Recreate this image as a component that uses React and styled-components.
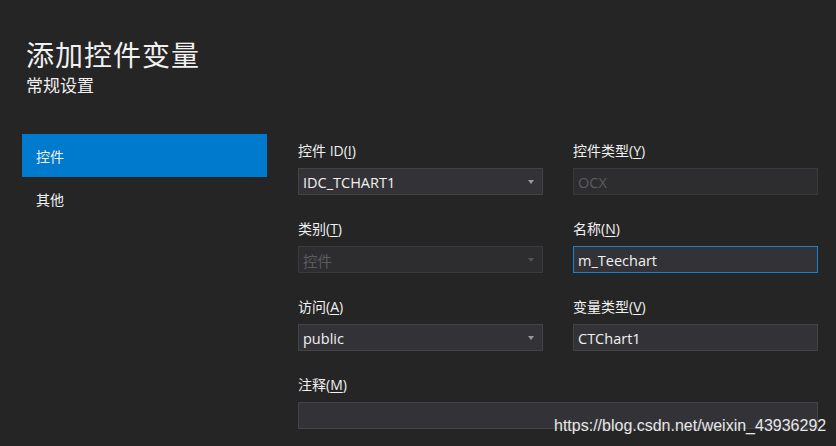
import React from "react";
import styled, { createGlobalStyle } from "styled-components";

const Global = createGlobalStyle`
  html, body { margin: 0; padding: 0; background: #252526; }
  body {
    width: 836px;
    height: 446px;
    overflow: hidden;
    font-family: "Open Sans", "Noto Sans CJK SC", sans-serif;
    color: #f1f1f1;
  }
`;

const Page = styled.div`
  position: relative;
  width: 836px;
  height: 446px;
  box-sizing: border-box;
  padding: 38px 0 0 22px;
`;

const Header = styled.div`
  padding-left: 4px;
  display: flex;
  flex-direction: column;
  gap: 5px;
`;

const Title = styled.div`
  font-family: "Noto Sans CJK SC", sans-serif;
  font-size: 28px;
  line-height: 32px;
  letter-spacing: 1px;
`;

const Subtitle = styled.div`
  font-family: "Noto Sans CJK SC", sans-serif;
  font-size: 17px;
  line-height: 20px;
`;

const Body = styled.div`
  display: flex;
  gap: 31px;
  margin-top: 39px;
`;

const Sidebar = styled.div`
  width: 245px;
  display: flex;
  flex-direction: column;
`;

const NavItem = styled.div`
  height: 43px;
  display: flex;
  align-items: center;
  padding-left: 14px;
  font-family: "Noto Sans CJK SC", sans-serif;
  font-size: 14px;
  background: ${(p) => (p.active ? "#007acc" : "transparent")};
  color: #f1f1f1;
`;

const Form = styled.div`
  display: grid;
  grid-template-columns: 245px 245px;
  column-gap: 30px;
  row-gap: 24px;
  padding-top: 7px;
`;

const Field = styled.div`
  display: flex;
  flex-direction: column;
  gap: 7px;
  grid-column: ${(p) => (p.wide ? "1 / 3" : "auto")};
`;

const Label = styled.div`
  font-family: "Open Sans", "Noto Sans CJK SC", sans-serif;
  font-size: 14px;
  line-height: 20px;
  color: #f1f1f1;
  u { text-decoration-thickness: 1px; text-underline-offset: 2px; }
`;

const Box = styled.div`
  height: 27px;
  box-sizing: border-box;
  border: 1px solid ${(p) => (p.focused ? "#1c7fd0" : p.disabled ? "#3a3a3d" : "#434346")};
  background: ${(p) => (p.disabled ? "#2d2d30" : "#333337")};
  display: flex;
  align-items: center;
  justify-content: space-between;
  padding: 1px 8px 0 4px;
  font-family: "Open Sans", "Noto Sans CJK SC", sans-serif;
  font-size: 14.5px;
  color: ${(p) => (p.disabled ? "#5c5c5f" : "#f1f1f1")};
`;

const Arrow = styled.span`
  width: 0;
  height: 0;
  border-left: 3.5px solid transparent;
  border-right: 3.5px solid transparent;
  border-top: 4px solid ${(p) => (p.disabled ? "#555558" : "#9a9a9a")};
`;

const Watermark = styled.div`
  position: absolute;
  left: 554px;
  top: 416px;
  font-family: "Liberation Sans", Arial, sans-serif;
  font-size: 16px;
  line-height: 20px;
  color: #e8e8e8;
`;

function Select({ value, disabled }) {
  return (
    <Box disabled={disabled}>
      <span>{value}</span>
      <Arrow disabled={disabled} />
    </Box>
  );
}

export default function App() {
  return (
    <>
      <Global />
      <Page>
        <Header>
          <Title>添加控件变量</Title>
          <Subtitle>常规设置</Subtitle>
        </Header>
        <Body>
          <Sidebar>
            <NavItem active>控件</NavItem>
            <NavItem>其他</NavItem>
          </Sidebar>
          <Form>
            <Field>
              <Label>控件 ID(<u>I</u>)</Label>
              <Select value="IDC_TCHART1" />
            </Field>
            <Field>
              <Label>控件类型(<u>Y</u>)</Label>
              <Box disabled>OCX</Box>
            </Field>
            <Field>
              <Label>类别(<u>T</u>)</Label>
              <Select value="控件" disabled />
            </Field>
            <Field>
              <Label>名称(<u>N</u>)</Label>
              <Box focused>m_Teechart</Box>
            </Field>
            <Field>
              <Label>访问(<u>A</u>)</Label>
              <Select value="public" />
            </Field>
            <Field>
              <Label>变量类型(<u>V</u>)</Label>
              <Box>CTChart1</Box>
            </Field>
            <Field wide>
              <Label>注释(<u>M</u>)</Label>
              <Box />
            </Field>
          </Form>
        </Body>
        <Watermark>https://blog.csdn.net/weixin_43936292</Watermark>
      </Page>
    </>
  );
}
